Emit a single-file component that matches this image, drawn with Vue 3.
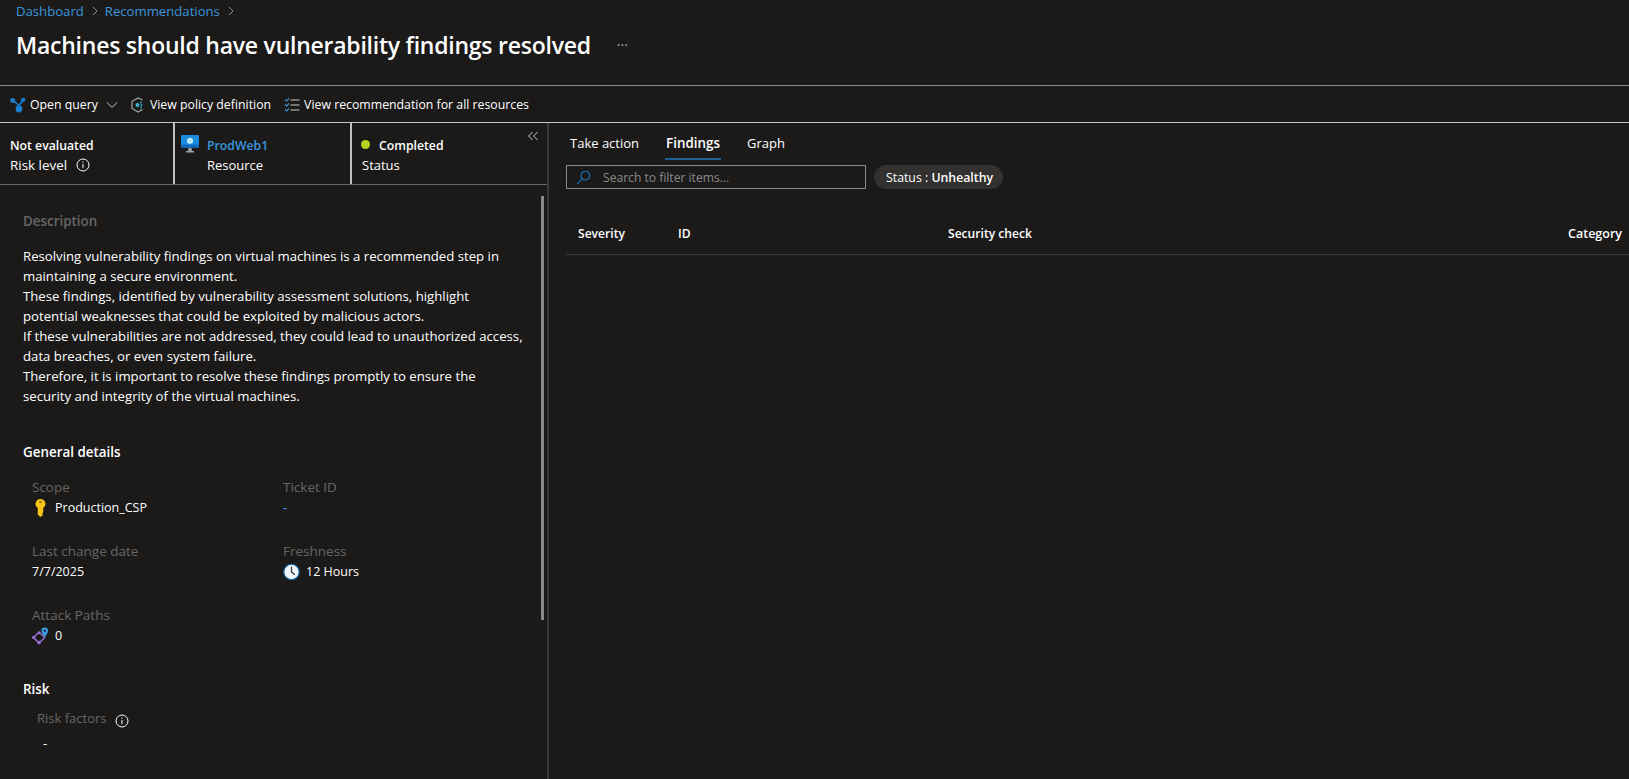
<script setup>
const description = [
  "Resolving vulnerability findings on virtual machines is a recommended step in maintaining a secure environment.",
  "These findings, identified by vulnerability assessment solutions, highlight potential weaknesses that could be exploited by malicious actors.",
  "If these vulnerabilities are not addressed, they could lead to unauthorized access, data breaches, or even system failure.",
  "Therefore, it is important to resolve these findings promptly to ensure the security and integrity of the virtual machines.",
];
const columns = [
  { label: "Severity", cls: "col-sev" },
  { label: "ID", cls: "col-id" },
  { label: "Security check", cls: "col-check" },
  { label: "Category", cls: "col-cat" },
];
</script>

<template>
  <div class="page">
    <header class="head">
      <nav class="crumbs">
        <a>Dashboard</a>
        <svg class="crumb-sep" viewBox="0 0 10 10"><path d="M3 1l4 4-4 4" /></svg>
        <a>Recommendations</a>
        <svg class="crumb-sep" viewBox="0 0 10 10"><path d="M3 1l4 4-4 4" /></svg>
      </nav>
      <div class="title-row">
        <h1>Machines should have vulnerability findings resolved</h1>
        <span class="more">···</span>
      </div>
    </header>

    <div class="toolbar">
      <button class="tool tool-query">
        <svg class="icon16" viewBox="0 0 16 16">
          <path d="M3 3.500l6 5M13 3L9 8.500M9 8.500V12" stroke="#1b7fd0" stroke-width="1.600" fill="none" />
          <circle cx="2.800" cy="3.400" r="2.500" fill="#1b7fd0" />
          <circle cx="13.200" cy="2.800" r="2.100" fill="#1b7fd0" />
          <circle cx="9" cy="12" r="3.400" fill="#1b7fd0" />
        </svg>
        <span>Open query</span>
        <svg class="chev" viewBox="0 0 12 8"><path d="M1 1.500l5 5 5-5" /></svg>
      </button>
      <button class="tool tool-policy">
        <svg class="icon16" viewBox="0 0 16 16">
          <path d="M12.500 3L8 1 2 4.300v7.200L8 15l4.500-2.500" fill="none" stroke="#9aa7ad" stroke-width="1.200" />
          <circle cx="7.500" cy="8" r="2" fill="#36b3d9" />
          <circle cx="11" cy="5.500" r=".9" fill="#36b3d9" />
          <circle cx="11.500" cy="8" r=".9" fill="#36b3d9" />
          <circle cx="11" cy="10.500" r=".9" fill="#36b3d9" />
        </svg>
        <span>View policy definition</span>
      </button>
      <button class="tool tool-all">
        <svg class="icon16" viewBox="0 0 16 16">
          <path d="M1 2.500l1.500 1.500L5 1.500M1 7.500L2.500 9 5 6.500M1 12.500L2.500 14 5 11.500" fill="none" stroke="#3a96dd" stroke-width="1.100" />
          <path d="M6.500 3h9M6.500 8h9M6.500 13h9" stroke="#c8c8c8" stroke-width="1.200" />
        </svg>
        <span>View recommendation for all resources</span>
      </button>
    </div>

    <main class="main">
      <aside class="left">
        <div class="summary">
          <div class="cell cell-risk">
            <strong>Not evaluated</strong>
            <span class="with-info">Risk level
              <svg class="info" viewBox="0 0 14 14"><circle cx="7" cy="7" r="6" /><path d="M7 6v4.200M7 3.600v1.200" /></svg>
            </span>
          </div>
          <div class="cell cell-res">
            <svg class="vm" viewBox="0 0 18 18">
              <rect x="0" y="0" width="18" height="12.500" rx=".8" fill="#1b8be0" />
              <rect x="0" y="9.500" width="18" height="3" fill="#0f6cbd" />
              <path d="M9 2.500l3 1.700v3.400L9 9.300 6 7.600V4.200z" fill="#bfe8fb" />
              <path d="M7.500 13h3l.5 3h2v1.500H5V16h2z" fill="#9aa0a6" />
            </svg>
            <div class="res-text">
              <a class="res-link">ProdWeb1</a>
              <span>Resource</span>
            </div>
          </div>
          <div class="cell cell-status">
            <div class="status-top"><i class="dot"></i><strong>Completed</strong></div>
            <span>Status</span>
            <svg class="collapse" viewBox="0 0 12 12"><path d="M5.500 2L1.500 6l4 4M10.500 2l-4 4 4 4" /></svg>
          </div>
        </div>

        <div class="details">
          <h3 class="muted-head">Description</h3>
          <div class="desc">
            <p v-for="line in description" :key="line">{{ line }}</p>
          </div>

          <h3 class="section">General details</h3>
          <div class="fields">
            <div class="field">
              <label>Scope</label>
              <div class="val">
                <svg class="icon-val" viewBox="0 0 14 20">
                  <path d="M7 0a5.500 5.500 0 0 1 3 10.100V15l-1.200 1.200L10 17.500 7 20l-3-2.500V10.100A5.500 5.500 0 0 1 7 0z" fill="#fcc419" />
                  <ellipse cx="7" cy="3.400" rx="1.900" ry="1.200" fill="#a87b06" />
                </svg>
                Production_CSP
              </div>
            </div>
            <div class="field">
              <label>Ticket ID</label>
              <div class="val ticket">-</div>
            </div>
            <div class="field">
              <label>Last change date</label>
              <div class="val">7/7/2025</div>
            </div>
            <div class="field">
              <label>Freshness</label>
              <div class="val">
                <svg class="icon-val clock" viewBox="0 0 18 18">
                  <circle cx="9" cy="9" r="8.200" fill="#f0f6fa" stroke="#0f5f9e" stroke-width="1.300" />
                  <path d="M9 3.500V9l3.500 3" fill="none" stroke="#333" stroke-width="1.300" />
                </svg>
                12 Hours
              </div>
            </div>
            <div class="field">
              <label>Attack Paths</label>
              <div class="val">
                <svg class="icon-val" viewBox="0 0 18 18">
                  <path d="M7.500 5L1.500 10.500 7.500 16.500l6-6z" fill="none" stroke="#9a6fd6" stroke-width="1.500" />
                  <circle cx="1.900" cy="10.500" r="1.800" fill="#9a6fd6" />
                  <circle cx="7.500" cy="16" r="1.900" fill="#9a6fd6" />
                  <circle cx="7.500" cy="5.500" r="1.600" fill="#9a6fd6" />
                  <path d="M13.500 0a3.500 3.500 0 0 1 3.500 3.500C17 6 13.500 10.500 13.500 10.500S10 6 10 3.500A3.500 3.500 0 0 1 13.500 0z" fill="#3a96dd" />
                  <circle cx="13.500" cy="3.500" r="1.200" fill="#123" />
                </svg>
                0
              </div>
            </div>
          </div>

          <h3 class="section risk">Risk</h3>
          <div class="risk-block">
            <div class="risk-label">
              <label>Risk factors</label>
              <svg class="info" viewBox="0 0 14 14"><circle cx="7" cy="7" r="6" /><path d="M7 6v4.200M7 3.600v1.200" /></svg>
            </div>
            <div class="risk-val">-</div>
          </div>
        </div>

        <div class="scrollbar"></div>
      </aside>

      <section class="right">
        <div class="tabs">
          <span class="tab">Take action</span>
          <span class="tab active">Findings</span>
          <span class="tab">Graph</span>
        </div>
        <div class="filters">
          <div class="search">
            <svg class="search-icon" viewBox="0 0 16 16">
              <circle cx="10" cy="6" r="4.700" />
              <path d="M6.600 9.400L1 15" />
            </svg>
            <span>Search to filter items...</span>
          </div>
          <div class="pill">Status : <b>Unhealthy</b></div>
        </div>
        <div class="thead">
          <span v-for="c in columns" :key="c.label" :class="c.cls">{{ c.label }}</span>
        </div>
      </section>
    </main>
  </div>
</template>

<style scoped>
.page {
  width: 100%;
  height: 100vh;
  overflow: hidden;
  display: flex;
  flex-direction: column;
  background: #1b1a19;
  color: #fff;
  font-family: "Open Sans", "Noto Sans", "Liberation Sans", sans-serif;
  font-size: 13px;
  line-height: 20px;
}
.head { height: 85px; flex: none; padding-left: 16px; box-sizing: border-box; }
.crumbs { display: flex; align-items: center; height: 22px; font-size: 13.150px; color: #3a96dd; }
.crumb-sep { width: 10px; height: 10px; margin: 0 5px 0 6px; fill: none; stroke: #8a8886; stroke-width: 1; }
.title-row { display: flex; align-items: center; height: 46px; }
h1 { margin: 0; font-size: 23px; font-weight: 600; line-height: 46px; letter-spacing: -0.24px; }
.more { margin-left: 26px; color: #aaa; font-size: 14px; letter-spacing: 0; }

.toolbar {
  flex: none;
  height: 38px;
  box-sizing: border-box;
  display: flex;
  align-items: center;
  padding-top: 1px;
  border-top: 1px solid #8a8a8a;
  border-bottom: 1px solid #c8c8c8;
  font-size: 12.300px;
}
.tool {
  display: flex;
  align-items: center;
  gap: 4px;
  padding: 0;
  background: none;
  border: 0;
  color: #fff;
  font: inherit;
}
.tool-query { margin-left: 10px; }
.tool-policy { margin-left: 12px; }
.tool-all { margin-left: 13px; }
.icon16 { width: 16px; height: 16px; flex: none; }
.chev { width: 12px; height: 8px; margin-left: 4px; fill: none; stroke: #ccc; stroke-width: 1; }

.main { flex: 1; display: flex; min-height: 0; }
.left {
  position: relative;
  width: 547px;
  flex: none;
  overflow: hidden;
  border-right: 2px solid #3b3a39;
}
.summary { display: flex; height: 62px; box-sizing: border-box; border-bottom: 1px solid #6a6a6a; }
.cell { position: relative; display: flex; flex-direction: column; box-sizing: border-box; padding-top: 14px; }
.cell strong { font-weight: 600; font-size: 12.250px; line-height: 18px; }
.cell-risk { width: 175px; padding-left: 10px; border-right: 2px solid #c0c0c0; }
.with-info { display: flex; align-items: center; gap: 9px; font-size: 13.400px; }
.info { width: 14px; height: 14px; fill: none; stroke: #fff; stroke-width: 1; }
.cell-res {
  width: 177px;
  flex-direction: row;
  padding-left: 6px;
  gap: 8px;
  border-right: 2px solid #c0c0c0;
}
.vm { width: 18px; height: 18px; flex: none; margin-top: -2px; }
.res-text { display: flex; flex-direction: column; }
.res-link { color: #3a96dd; font-weight: 600; font-size: 12.250px; line-height: 18px; }
.cell-status { flex: 1; padding-left: 10px; }
.status-top { display: flex; align-items: center; gap: 9px; height: 18px; }
.dot { width: 9px; height: 9px; border-radius: 50%; background: #b5d21e; margin: -4px 0 0 -1px; }
.collapse { position: absolute; right: 8px; top: 7px; width: 12px; height: 12px; fill: none; stroke: #ccc; stroke-width: 1; }

.details { padding: 26px 22px 0 23px; }
h3 { margin: 0; font-size: 13.400px; font-weight: 600; }
.muted-head { color: #666; }
.desc { margin-top: 15px; font-size: 13.200px; }
.desc p { margin: 0; }
.section { margin-top: 36px; }
.section.risk { margin-top: 33px; }
.fields {
  display: grid;
  grid-template-columns: 251px 1fr;
  row-gap: 23px;
  margin-top: 15px;
  padding-left: 9px;
}
label { color: #666; font-size: 13.500px; }
.field .val { display: flex; align-items: center; gap: 6px; padding-top: 1px; font-size: 12.500px; }
.icon-val { width: 17px; height: 18px; flex: none; }
.field .ticket { color: #4a86e8; font-weight: 600; }
.risk-block { margin-top: 9px; padding-left: 14px; }
.risk-label { display: flex; align-items: center; gap: 8px; }
.risk-label label { font-size: 13px; }
.risk-label .info { margin-top: 5px; }
.risk-val { margin-top: 5px; padding-left: 6px; }
.scrollbar {
  position: absolute;
  right: 3px;
  top: 73px;
  width: 3px;
  height: 424px;
  background: #8a8a8a;
}

.right { flex: 1; min-width: 0; padding: 0 0 0 17px; }
.tabs { display: flex; height: 36px; gap: 27px; padding-left: 4px; }
.tab { position: relative; line-height: 40px; }
.tab.active { font-weight: 600; font-size: 13.400px; }
.tab.active::after {
  content: "";
  position: absolute;
  left: -1px;
  right: -1px;
  bottom: -1px;
  height: 2px;
  background: #1f5f96;
}
.filters { display: flex; gap: 8px; margin-top: 6px; }
.search {
  display: flex;
  align-items: center;
  width: 300px;
  height: 24px;
  box-sizing: border-box;
  padding: 1px 0 0 9px;
  gap: 12px;
  border: 1px solid #8a8a8a;
  color: #8a8a8a;
  font-size: 12.100px;
}
.search-icon { width: 15px; height: 15px; flex: none; fill: none; stroke: #1a6fb5; stroke-width: 1.200; }
.pill {
  height: 24px;
  line-height: 25px;
  padding: 0 10px 0 12px;
  border-radius: 12px;
  background: #323130;
  font-size: 12.300px;
}
.pill b { font-weight: 600; }
.thead {
  display: grid;
  grid-template-columns: 100px 270px 1fr auto;
  height: 42px;
  margin-top: 23px;
  padding: 0 7px 0 12px;
  border-bottom: 1px solid #3b3a39;
  font-size: 12.100px;
  font-weight: 600;
  line-height: 44px;
}
.col-cat { font-size: 12.500px; }
</style>

<style>
html, body { margin: 0; background: #1b1a19; }
</style>
